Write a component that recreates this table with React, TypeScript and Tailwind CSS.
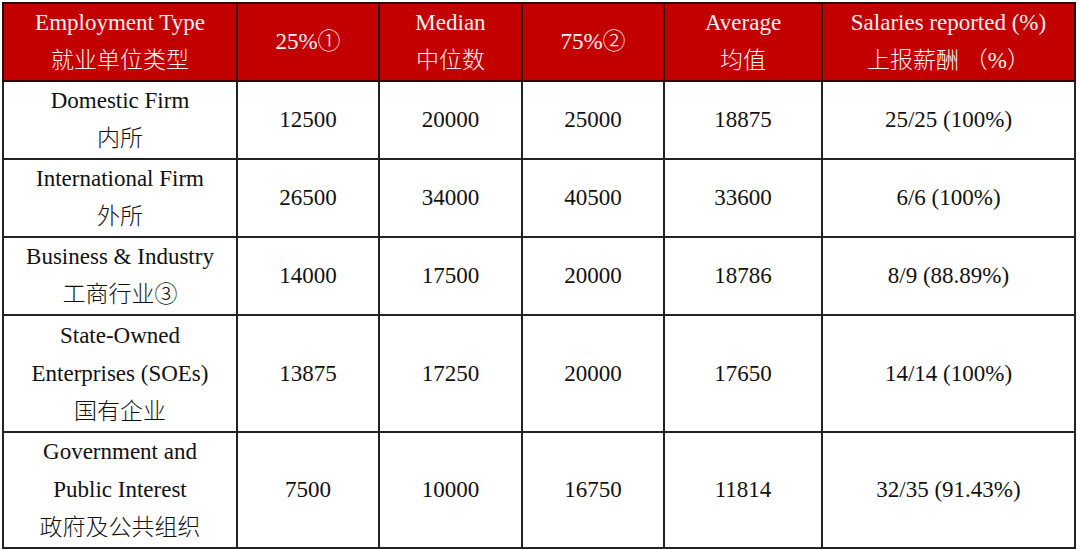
import React from "react";

const rows: { name: string[]; vals: string[]; h: string }[] = [
  { name: ["Domestic Firm", "内所"], vals: ["12500", "20000", "25000", "18875", "25/25 (100%)"], h: "h-[76px]" },
  { name: ["International Firm", "外所"], vals: ["26500", "34000", "40500", "33600", "6/6 (100%)"], h: "h-[78px]" },
  { name: ["Business & Industry", "工商行业③"], vals: ["14000", "17500", "20000", "18786", "8/9 (88.89%)"], h: "h-[78px]" },
  { name: ["State-Owned", "Enterprises (SOEs)", "国有企业"], vals: ["13875", "17250", "20000", "17650", "14/14 (100%)"], h: "h-[117px]" },
  { name: ["Government and", "Public Interest", "政府及公共组织"], vals: ["7500", "10000", "16750", "11814", "32/35 (91.43%)"], h: "h-[116px]" },
];

const headers: string[][] = [
  ["Employment Type", "就业单位类型"],
  ["25%①"],
  ["Median", "中位数"],
  ["75%②"],
  ["Average", "均值"],
  ["Salaries reported (%)", "上报薪酬 （%）"],
];

export default function App() {
  return (
    <div className="w-[1080px] h-[550px] bg-white overflow-hidden pt-[2px] pl-[2px]">
      <table
        className="table-fixed border-collapse w-[1074px] text-[23px] leading-[38px] text-[#111] font-light"
        style={{ fontFamily: '"Liberation Serif", "Noto Sans CJK SC", serif' }}
      >
        <colgroup>
          <col className="w-[234px]" />
          <col className="w-[142px]" />
          <col className="w-[143px]" />
          <col className="w-[142px]" />
          <col className="w-[158px]" />
          <col className="w-[253px]" />
        </colgroup>
        <thead>
          <tr className="h-[78px] bg-[#c20000]">
            {headers.map((h, i) => (
              <th key={i} className="border-2 border-[#2a0a0a] font-light text-[#fff2f0] text-center align-middle p-0">
                {h.map((l, j) => (
                  <div key={j}>{l}</div>
                ))}
              </th>
            ))}
          </tr>
        </thead>
        <tbody>
          {rows.map((r, i) => (
            <tr key={i} className={r.h}>
              <td className="border-2 border-[#222] text-center align-middle p-0">
                {r.name.map((l, j) => (
                  <div key={j}>{l}</div>
                ))}
              </td>
              {r.vals.map((v, j) => (
                <td key={j} className="border-2 border-[#222] text-center align-middle p-0">
                  {v}
                </td>
              ))}
            </tr>
          ))}
        </tbody>
      </table>
    </div>
  );
}
